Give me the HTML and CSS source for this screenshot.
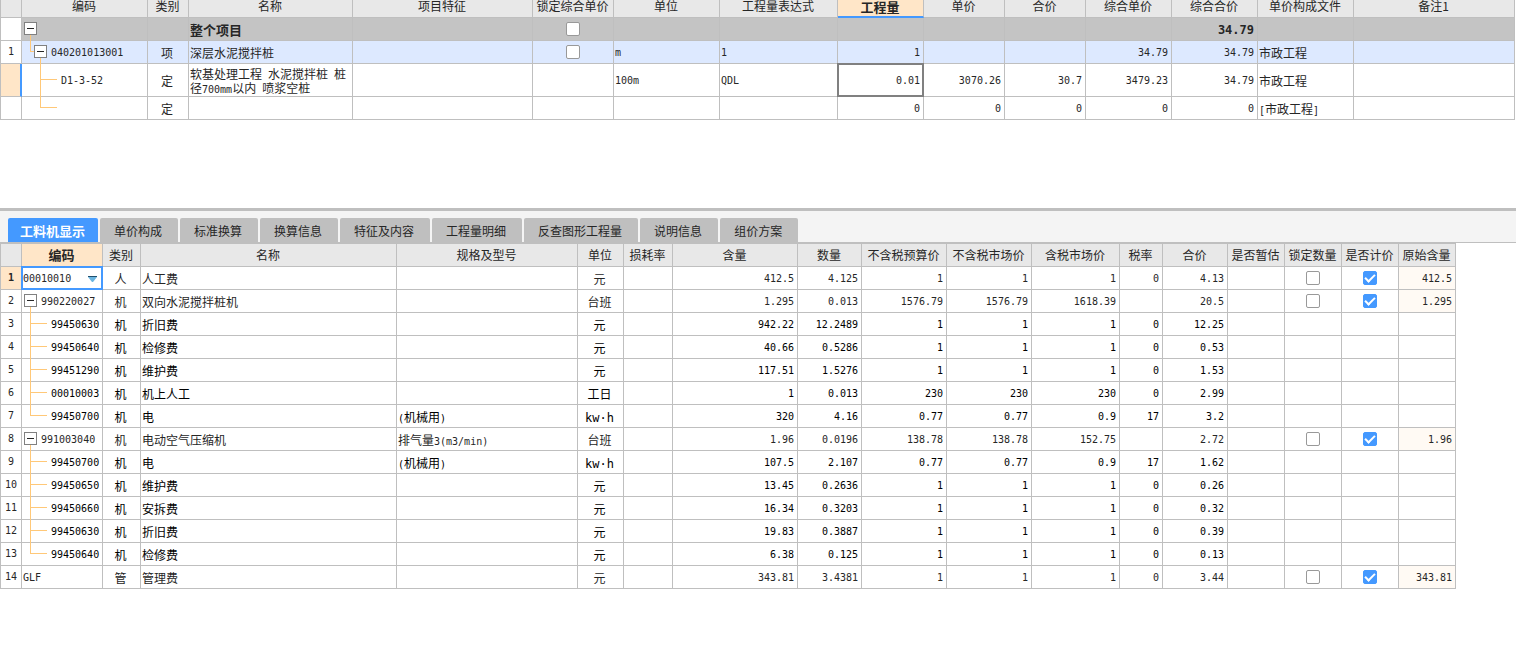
FILE: index.html
```html
<!DOCTYPE html>
<html lang="zh-CN">
<head>
<meta charset="utf-8">
<title>工程量清单</title>
<link rel="stylesheet" href="styles.css">
</head>
<body>
<section class="bill-pane">
<table class="grid bill">
<colgroup><col class="w21"><col class="w126"><col class="w41"><col class="w164"><col class="w180"><col class="w81"><col class="w106"><col class="w118"><col class="w86"><col class="w81"><col class="w81"><col class="w86"><col class="w86"><col class="w96"><col></colgroup>
<thead>
<tr><th></th><th>编码</th><th>类别</th><th>名称</th><th>项目特征</th><th>锁定综合单价</th><th>单位</th><th>工程量表达式</th><th class="current">工程量</th><th>单价</th><th>合价</th><th>综合单价</th><th>综合合价</th><th>单价构成文件</th><th>备注1</th></tr>
</thead>
<tbody>
<tr class="total"><td></td><td><button class="toggle" aria-label="折叠整个项目"></button></td><td></td><td>整个项目</td><td></td><td><input type="checkbox" aria-label="锁定综合单价"></td><td></td><td></td><td></td><td></td><td></td><td></td><td>34.79</td><td></td><td></td></tr>
<tr class="item"><td>1</td><td class="branch"><button class="toggle" aria-label="折叠清单项"></button>040201013001</td><td>项</td><td>深层水泥搅拌桩</td><td></td><td><input type="checkbox" aria-label="锁定综合单价"></td><td>m</td><td>1</td><td>1</td><td></td><td></td><td>34.79</td><td>34.79</td><td>市政工程</td><td></td></tr>
<tr class="norm"><td class="marker"></td><td class="leaf">D1-3-52</td><td>定</td><td>软基处理工程<span class="n"> </span>水泥搅拌桩<span class="n"> </span>桩<br>径<span class="n">700mm</span>以内<span class="n"> </span>喷浆空桩</td><td></td><td></td><td>100m</td><td>QDL</td><td class="selected">0.01</td><td>3070.26</td><td>30.7</td><td>3479.23</td><td>34.79</td><td>市政工程</td><td></td></tr>
<tr><td></td><td class="leaf next"></td><td>定</td><td></td><td></td><td></td><td></td><td></td><td>0</td><td>0</td><td>0</td><td>0</td><td>0</td><td><span class="n">[</span>市政工程<span class="n">]</span></td><td></td></tr>
</tbody>
</table>
</section>
<section class="detail-pane">
<nav class="tabs" role="tablist">
<button class="tab active" role="tab" aria-selected="true">工料机显示</button>
<button class="tab" role="tab">单价构成</button>
<button class="tab" role="tab">标准换算</button>
<button class="tab" role="tab">换算信息</button>
<button class="tab" role="tab">特征及内容</button>
<button class="tab" role="tab">工程量明细</button>
<button class="tab" role="tab">反查图形工程量</button>
<button class="tab" role="tab">说明信息</button>
<button class="tab" role="tab">组价方案</button>
</nav>
<div class="detail-body">
<table class="grid resources">
<colgroup><col class="w21"><col class="w81"><col class="w38"><col><col class="w181"><col class="w46"><col class="w49"><col class="w125"><col class="w64"><col class="w85"><col class="w85"><col class="w88"><col class="w43"><col class="w65"><col class="w57"><col class="w57"><col class="w57"><col class="w57"></colgroup>
<thead>
<tr><th></th><th class="current">编码</th><th>类别</th><th>名称</th><th>规格及型号</th><th>单位</th><th>损耗率</th><th>含量</th><th>数量</th><th>不含税预算价</th><th>不含税市场价</th><th>含税市场价</th><th>税率</th><th>合价</th><th>是否暂估</th><th>锁定数量</th><th>是否计价</th><th>原始含量</th></tr>
</thead>
<tbody>
<tr class="main"><td class="marker">1</td><td class="editing"><select aria-label="编码"><option>00010010</option></select><svg class="arrow" viewBox="0 0 9 6"><path d="M0 0h9v1L5 6H4L0 1z" fill="#6bb5e0"/><path d="M0 0h9v1H0z" fill="#1f4f6e"/></svg></td><td>人</td><td>人工费</td><td></td><td>元</td><td></td><td>412.5</td><td>4.125</td><td>1</td><td>1</td><td>1</td><td>0</td><td>4.13</td><td></td><td><input type="checkbox" aria-label="锁定数量"></td><td><input type="checkbox" aria-label="是否计价" checked></td><td>412.5</td></tr>
<tr class="main"><td>2</td><td class="parent"><button class="toggle" aria-label="折叠"></button>990220027</td><td>机</td><td>双向水泥搅拌桩机</td><td></td><td>台班</td><td></td><td>1.295</td><td>0.013</td><td>1576.79</td><td>1576.79</td><td>1618.39</td><td></td><td>20.5</td><td></td><td><input type="checkbox" aria-label="锁定数量"></td><td><input type="checkbox" aria-label="是否计价" checked></td><td>1.295</td></tr>
<tr><td>3</td><td class="leaf">99450630</td><td>机</td><td>折旧费</td><td></td><td>元</td><td></td><td>942.22</td><td>12.2489</td><td>1</td><td>1</td><td>1</td><td>0</td><td>12.25</td><td></td><td></td><td></td><td></td></tr>
<tr><td>4</td><td class="leaf">99450640</td><td>机</td><td>检修费</td><td></td><td>元</td><td></td><td>40.66</td><td>0.5286</td><td>1</td><td>1</td><td>1</td><td>0</td><td>0.53</td><td></td><td></td><td></td><td></td></tr>
<tr><td>5</td><td class="leaf">99451290</td><td>机</td><td>维护费</td><td></td><td>元</td><td></td><td>117.51</td><td>1.5276</td><td>1</td><td>1</td><td>1</td><td>0</td><td>1.53</td><td></td><td></td><td></td><td></td></tr>
<tr><td>6</td><td class="leaf">00010003</td><td>机</td><td>机上人工</td><td></td><td>工日</td><td></td><td>1</td><td>0.013</td><td>230</td><td>230</td><td>230</td><td>0</td><td>2.99</td><td></td><td></td><td></td><td></td></tr>
<tr><td>7</td><td class="leaf">99450700</td><td>机</td><td>电</td><td><span class="n">(</span>机械用<span class="n">)</span></td><td><span class="unit">kw·h</span></td><td></td><td>320</td><td>4.16</td><td>0.77</td><td>0.77</td><td>0.9</td><td>17</td><td>3.2</td><td></td><td></td><td></td><td></td></tr>
<tr class="main"><td>8</td><td class="parent"><button class="toggle" aria-label="折叠"></button>991003040</td><td>机</td><td>电动空气压缩机</td><td>排气量<span class="n">3(m3/min)</span></td><td>台班</td><td></td><td>1.96</td><td>0.0196</td><td>138.78</td><td>138.78</td><td>152.75</td><td></td><td>2.72</td><td></td><td><input type="checkbox" aria-label="锁定数量"></td><td><input type="checkbox" aria-label="是否计价" checked></td><td>1.96</td></tr>
<tr><td>9</td><td class="leaf">99450700</td><td>机</td><td>电</td><td><span class="n">(</span>机械用<span class="n">)</span></td><td><span class="unit">kw·h</span></td><td></td><td>107.5</td><td>2.107</td><td>0.77</td><td>0.77</td><td>0.9</td><td>17</td><td>1.62</td><td></td><td></td><td></td><td></td></tr>
<tr><td>10</td><td class="leaf">99450650</td><td>机</td><td>维护费</td><td></td><td>元</td><td></td><td>13.45</td><td>0.2636</td><td>1</td><td>1</td><td>1</td><td>0</td><td>0.26</td><td></td><td></td><td></td><td></td></tr>
<tr><td>11</td><td class="leaf">99450660</td><td>机</td><td>安拆费</td><td></td><td>元</td><td></td><td>16.34</td><td>0.3203</td><td>1</td><td>1</td><td>1</td><td>0</td><td>0.32</td><td></td><td></td><td></td><td></td></tr>
<tr><td>12</td><td class="leaf">99450630</td><td>机</td><td>折旧费</td><td></td><td>元</td><td></td><td>19.83</td><td>0.3887</td><td>1</td><td>1</td><td>1</td><td>0</td><td>0.39</td><td></td><td></td><td></td><td></td></tr>
<tr><td>13</td><td class="leaf">99450640</td><td>机</td><td>检修费</td><td></td><td>元</td><td></td><td>6.38</td><td>0.125</td><td>1</td><td>1</td><td>1</td><td>0</td><td>0.13</td><td></td><td></td><td></td><td></td></tr>
<tr class="main"><td>14</td><td>GLF</td><td>管</td><td>管理费</td><td></td><td>元</td><td></td><td>343.81</td><td>3.4381</td><td>1</td><td>1</td><td>1</td><td>0</td><td>3.44</td><td></td><td><input type="checkbox" aria-label="锁定数量"></td><td><input type="checkbox" aria-label="是否计价" checked></td><td>343.81</td></tr>
</tbody>
</table>
</div>
</section>
</body>
</html>
```

FILE: styles.css
```css
:root {
  --line: #bfbfbf;
  --head: #e8e8e8;
  --blue: #4499ff;
  --peach: #ffe6c8;
  --tree: #ffc878;
  --text: #262626;
  --cjk: "Noto Sans CJK SC", "Noto Sans", sans-serif;
  --mono: "DejaVu Sans Mono", "Noto Sans CJK SC", monospace;
}

*, *::before, *::after { box-sizing: border-box; }

body {
  margin: 0;
  background: #fff;
  color: var(--text);
  font-family: var(--cjk);
  font-size: 12px;
  line-height: 14px;
}

button, select {
  font: inherit;
  color: inherit;
  border: 0;
  padding: 0;
  margin: 0;
}

.bill-pane { padding: 0 1px 88px 0; }

/* Grids */
.grid {
  width: 100%;
  table-layout: fixed;
  border-collapse: separate;
  border-spacing: 0;
  border-left: 1px solid var(--line);
}

.grid th, .grid td {
  position: relative;
  height: 23px;
  padding: 2px 3px 0 1px;
  border-right: 1px solid var(--line);
  border-bottom: 1px solid var(--line);
  text-align: center;
  white-space: nowrap;
}

.grid th {
  padding: 0 1px 0 0;
  background: var(--head);
  font-weight: normal;
}

.grid th.current { background: var(--peach); font-weight: bold; font-size: 13px; }

.n,
.grid td:nth-child(1),
.grid td:nth-child(2) {
  font-family: var(--mono);
  font-size: 10px;
}

.n { white-space: pre; line-height: 10px; }
.unit { font-family: var(--mono); line-height: 10px; }
.grid td:nth-child(1) { padding: 0; }
.grid td:nth-child(2), .grid td:nth-child(4), .grid td:nth-child(5) { text-align: left; }
.grid td.marker { background: var(--peach); font-weight: bold; }
.grid td:has(input) { padding: 0; }

.w21 { width: 21px; }
.w38 { width: 38px; }
.w41 { width: 41px; }
.w43 { width: 43px; }
.w46 { width: 46px; }
.w49 { width: 49px; }
.w57 { width: 57px; }
.w64 { width: 64px; }
.w65 { width: 65px; }
.w81 { width: 81px; }
.w85 { width: 85px; }
.w86 { width: 86px; }
.w88 { width: 88px; }
.w96 { width: 96px; }
.w106 { width: 106px; }
.w118 { width: 118px; }
.w125 { width: 125px; }
.w126 { width: 126px; }
.w164 { width: 164px; }
.w180 { width: 180px; }
.w181 { width: 181px; }

/* Bill grid */
.bill th { height: 18px; padding-bottom: 5px; line-height: 12px; }
.bill th.current { border-bottom: 2px solid var(--blue); padding-bottom: 3px; }
.bill .norm td { height: 33px; }
.bill .norm .marker { border-right: 2px solid var(--blue); }

.bill td:nth-child(n+7):nth-child(-n+13) {
  font-family: var(--mono);
  font-size: 10px;
}

.bill td:nth-child(7), .bill td:nth-child(8), .bill td:nth-child(14) { text-align: left; }
.bill td:nth-child(n+9):nth-child(-n+13) { text-align: right; }
.bill .total td { background: #c4c4c4; font-weight: bold; }
.bill .total td:nth-child(4) { font-size: 13px; }
.bill .total td:nth-child(13) { font-size: 12px; }
.bill .total td:first-child { background: #fff; }
.bill .item td { background: #dde9ff; }
.bill .item td:first-child { background: #fff; }
.bill .selected::after {
  content: "";
  position: absolute;
  inset: 0;
  outline: 2px solid #808080;
  outline-offset: -1px;
}

/* Resource grid */
.detail-pane { border-top: 3px solid var(--line); }
.detail-body { padding-right: 60px; }
.resources { border-top: 1px solid var(--line); color: #000; }
.resources th, .resources .main { color: var(--text); }
.resources td:first-child { color: var(--text); }

.resources td:nth-child(n+7):nth-child(-n+14),
.resources td:nth-child(18) {
  text-align: right;
  font-family: var(--mono);
  font-size: 10px;
}

.resources .main td:nth-child(18) { background: #fffaf4; }

/* Tree column */
.toggle {
  position: absolute;
  z-index: 1;
  left: 2px;
  top: 4px;
  width: 13px;
  height: 13px;
  background: #fff;
  border: 1px solid #808080;
}

.toggle::before {
  content: "";
  position: absolute;
  left: 2px;
  top: 5px;
  width: 7px;
  height: 1px;
  background: #262626;
}

.branch .toggle { left: 12px; }
.grid td.branch { padding-left: 29px; }
.grid td.parent { padding-left: 19px; }
.grid td.leaf { padding-left: 29px; padding-right: 0; }
.bill td.leaf { padding-left: 39px; }

.leaf::before, .branch::before {
  content: "";
  position: absolute;
  left: 8px;
  top: -13px;
  width: 17px;
  height: 24px;
  border: solid var(--tree);
  border-width: 0 0 1px 1px;
}

.branch::before { top: -6px; height: 17px; width: 4px; }
.bill .leaf::before { left: 18px; top: -6px; height: 22px; }
.bill .next::before { top: -18px; height: 29px; }

/* Code editor */
.editing::after {
  content: "";
  position: absolute;
  inset: 0;
  outline: 2px solid var(--blue);
  outline-offset: -1px;
  pointer-events: none;
}

.editing select {
  display: block;
  width: 100%;
  height: 20px;
  appearance: none;
  background: none;
}

.arrow {
  position: absolute;
  right: 5px;
  top: 9px;
  width: 9px;
  height: 6px;
  pointer-events: none;
}

/* Tick boxes */
input[type="checkbox"] {
  appearance: none;
  display: block;
  position: relative;
  width: 14px;
  height: 14px;
  margin: 0 auto;
  background: #fff;
  border: 1px solid #999;
  border-radius: 2px;
}

input[type="checkbox"]:checked { background: var(--blue); border-color: var(--blue); }

input[type="checkbox"]:checked::after {
  content: "";
  position: absolute;
  left: 1px;
  top: 2px;
  width: 10px;
  height: 6px;
  border: solid #fff;
  border-width: 0 0 2px 2px;
  transform: rotate(-45deg);
}

/* Tabs */
.tabs {
  display: flex;
  gap: 2px;
  padding: 7px 8px 0;
  background: #f4f4f4;
  border-bottom: 1px solid var(--line);
}

.tab {
  height: 24px;
  padding: 2px 16px 0 14px;
  background: var(--line);
  border-radius: 2px 2px 0 0;
  white-space: nowrap;
}

.tab.active {
  padding: 2px 13px 0 12px;
  background: var(--blue);
  color: #fff;
  font-size: 13px;
  font-weight: bold;
}
```
